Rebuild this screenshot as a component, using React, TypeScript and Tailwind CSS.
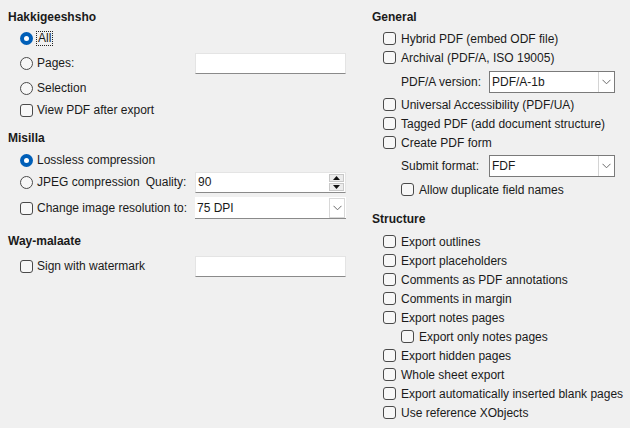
import React from 'react';

const font = { fontFamily: '"Segoe UI", "Liberation Sans", Arial, sans-serif' };

function Radio({ checked }: { checked?: boolean }) {
  return checked ? (
    <span className="flex h-[13px] w-[13px] shrink-0 items-center justify-center rounded-full bg-[#005fb8]">
      <span className="h-[5px] w-[5px] rounded-full bg-white" />
    </span>
  ) : (
    <span className="h-[13px] w-[13px] shrink-0 rounded-full border border-[#4a4a4a] bg-[#f7f7f7]" />
  );
}

function Check() {
  return <span className="h-[13px] w-[13px] shrink-0 rounded-[3px] border border-[#4a4a4a] bg-[#f7f7f7]" />;
}

function Chevron() {
  return (
    <svg width="9" height="6" viewBox="0 0 9 6" fill="none">
      <path d="M0.5 0.8 L4.5 4.8 L8.5 0.8" stroke="#6b6b6b" strokeWidth="1" />
    </svg>
  );
}

function TextBox({ value, children }: { value?: string; children?: React.ReactNode }) {
  return (
    <div className="relative flex h-[21px] w-[151px] items-center border border-[#e4e4e4] border-b-[#8a8a8a] bg-white pl-[2px]">
      <span>{value}</span>
      {children}
    </div>
  );
}

function Heading({ children, className = '' }: { children: React.ReactNode; className?: string }) {
  return <div className={`flex h-5 items-center font-bold ${className}`}>{children}</div>;
}

function CheckRow({ label, indent }: { label: string; indent?: boolean }) {
  return (
    <div className={`flex h-[19px] items-center gap-[5px] ${indent ? 'pl-[29px]' : 'pl-[11px]'}`}>
      <Check />
      <span>{label}</span>
    </div>
  );
}

function Select({ value }: { value: string }) {
  return (
    <div className="flex h-[22px] w-[126px] items-center border border-[#7a7a7a] bg-white">
      <span className="flex-1 pl-[2px]">{value}</span>
      <span className="flex h-full w-[16px] items-center justify-center border-l border-[#d4d4d4]">
        <Chevron />
      </span>
    </div>
  );
}

export default function App() {
  return (
    <div className="flex h-[428px] w-[630px] bg-[#f0f0f0] text-[12px] text-[#1a1a1a]" style={font}>
      {/* left column */}
      <div className="flex w-[372px] shrink-0 flex-col pl-[8px] pt-[7px]">
        <Heading>Hakkigeeshsho</Heading>
        <div className="flex h-[22px] items-center gap-[3px] pl-[12px]">
          <Radio checked />
          <span className="border border-dotted border-[#222] px-[1px] leading-[13px]">All</span>
        </div>
        <div className="mt-[3px] flex h-[22px] items-center pl-[12px]">
          <div className="flex w-[175px] items-center gap-[4px]">
            <Radio />
            <span>Pages:</span>
          </div>
          <TextBox />
        </div>
        <div className="mt-[3px] flex h-[22px] items-center gap-[4px] pl-[12px]">
          <Radio />
          <span>Selection</span>
        </div>
        <div className="flex h-[22px] items-center gap-[4px] pl-[12px]">
          <Check />
          <span>View PDF after export</span>
        </div>

        <Heading className="mt-[7px]">Misilla</Heading>
        <div className="mt-[1px] flex h-[22px] items-center gap-[4px] pl-[12px]">
          <Radio checked />
          <span>Lossless compression</span>
        </div>
        <div className="flex h-[22px] items-center pl-[12px]">
          <div className="flex w-[175px] items-center gap-[4px]">
            <Radio />
            <span>JPEG compression</span>
            <span className="ml-[2px]">Quality:</span>
          </div>
          <TextBox value="90">
            <div className="absolute right-[1px] top-[1px] flex w-[15px] flex-col gap-[1px]">
              <span className="flex h-[8px] items-center justify-center border border-[#c8c8c8] bg-[#ececec]">
                <svg width="7" height="4" viewBox="0 0 7 4">
                  <path d="M0 4 L3.5 0 L7 4 Z" fill="#111" />
                </svg>
              </span>
              <span className="flex h-[8px] items-center justify-center border border-[#c8c8c8] bg-[#ececec]">
                <svg width="7" height="4" viewBox="0 0 7 4">
                  <path d="M0 0 L3.5 4 L7 0 Z" fill="#111" />
                </svg>
              </span>
            </div>
          </TextBox>
        </div>
        <div className="mt-[4px] flex h-[22px] items-center pl-[12px]">
          <div className="flex w-[175px] items-center gap-[4px]">
            <Check />
            <span>Change image resolution to:</span>
          </div>
          <div className="flex h-[22px] w-[151px] items-center border-b border-[#8a8a8a] bg-white pl-[2px]">
            <span className="flex-1">75 DPI</span>
            <span className="mr-[1px] flex h-[20px] w-[16px] items-center justify-center border border-[#d8d8d8] bg-white">
              <Chevron />
            </span>
          </div>
        </div>

        <Heading className="mt-[12px]">Way-malaate</Heading>
        <div className="mt-[4px] flex h-[22px] items-center pl-[12px]">
          <div className="flex w-[175px] items-center gap-[4px]">
            <Check />
            <span>Sign with watermark</span>
          </div>
          <TextBox />
        </div>
      </div>

      {/* right column */}
      <div className="flex flex-1 flex-col pt-[7px]">
        <Heading>General</Heading>
        <div className="mt-[2px]" />
        <CheckRow label="Hybrid PDF (embed ODF file)" />
        <CheckRow label="Archival (PDF/A, ISO 19005)" />
        <div className="mt-[4px] flex h-[22px] items-center pl-[29px]">
          <span className="w-[88px]">PDF/A version:</span>
          <Select value="PDF/A-1b" />
        </div>
        <div className="mt-[2px]" />
        <CheckRow label="Universal Accessibility (PDF/UA)" />
        <CheckRow label="Tagged PDF (add document structure)" />
        <CheckRow label="Create PDF form" />
        <div className="mt-[3px] flex h-[22px] items-center pl-[29px]">
          <span className="w-[88px]">Submit format:</span>
          <Select value="FDF" />
        </div>
        <div className="mt-[3px]" />
        <CheckRow label="Allow duplicate field names" indent />

        <Heading className="mt-[10px]">Structure</Heading>
        <div className="mt-[3px]" />
        <CheckRow label="Export outlines" />
        <CheckRow label="Export placeholders" />
        <CheckRow label="Comments as PDF annotations" />
        <CheckRow label="Comments in margin" />
        <CheckRow label="Export notes pages" />
        <CheckRow label="Export only notes pages" indent />
        <CheckRow label="Export hidden pages" />
        <CheckRow label="Whole sheet export" />
        <CheckRow label="Export automatically inserted blank pages" />
        <CheckRow label="Use reference XObjects" />
      </div>
    </div>
  );
}
